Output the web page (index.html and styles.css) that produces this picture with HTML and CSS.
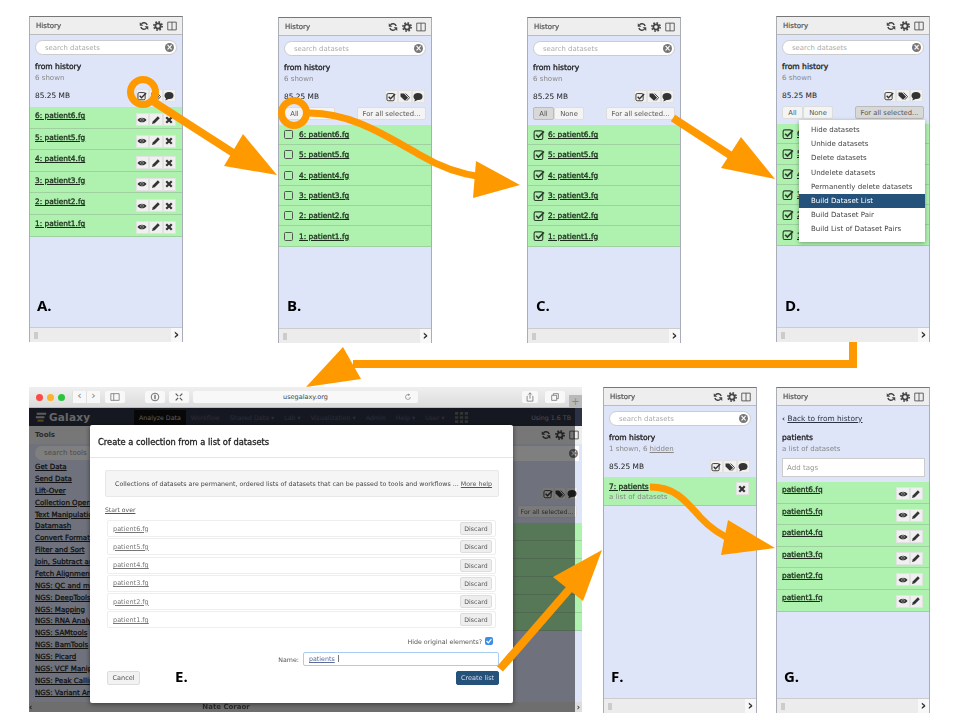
FILE: index.html
```html
<!DOCTYPE html>
<html lang="en">
<head>
  <meta charset="UTF-8">
  <title>Building a dataset list</title>
  <link rel="stylesheet" href="styles.css">
</head>
<body>

<svg class="defs" width="0" height="0">
  <symbol id="i-refresh" viewBox="0 0 16 16">
    <path d="M13 6.5A5.3 5.3 0 0 0 4 4.6M3 9.5A5.3 5.3 0 0 0 12 11.4" fill="none" stroke="currentColor" stroke-width="2.4"/>
    <path d="M1.2 1.8V7.6H7ZM14.8 14.2V8.4H9Z" fill="currentColor"/>
  </symbol>
  <symbol id="i-cog" viewBox="0 0 16 16">
    <circle cx="8" cy="8" r="4.2" fill="none" stroke="currentColor" stroke-width="3"/>
    <circle cx="8" cy="8" r="6.6" fill="none" stroke="currentColor" stroke-width="2.6" stroke-dasharray="2.6 2.58"/>
  </symbol>
  <symbol id="i-columns" viewBox="0 0 16 16">
    <path d="M1.2 1.8H14.8V14.2H1.2ZM8 1.8V14.2" fill="none" stroke="currentColor" stroke-width="1.3"/>
  </symbol>
  <symbol id="i-eye" viewBox="0 0 16 16">
    <path d="M.8 8C4 3 12 3 15.2 8C12 13 4 13 .8 8Z" fill="currentColor"/>
    <circle cx="8" cy="7.6" r="2.6" fill="#bbb"/>
    <circle cx="8" cy="8" r="1.6" fill="currentColor"/>
  </symbol>
  <symbol id="i-pencil" viewBox="0 0 16 16">
    <path d="M1.5 14.5L3 10L11 2L14 5L6 13Z" fill="currentColor"/>
  </symbol>
  <symbol id="i-times" viewBox="0 0 16 16">
    <path d="M3.6 3.6L12.4 12.4M12.4 3.6L3.6 12.4" fill="none" stroke="currentColor" stroke-width="3.6"/>
  </symbol>
  <symbol id="i-check" viewBox="0 0 16 16">
    <rect x="1.5" y="2.5" width="11.5" height="11.5" rx="2" fill="none" stroke="currentColor" stroke-width="1.5"/>
    <path d="M4.2 7.6L7.2 10.8L14.6 3.2" fill="none" stroke="currentColor" stroke-width="2.2"/>
  </symbol>
  <symbol id="i-tags" viewBox="0 0 16 16">
    <path d="M.8 2.5H6.5L13 9L8 14L.8 7Z" fill="currentColor"/>
    <path d="M9 2.5L15.4 9L10.8 14" fill="none" stroke="currentColor" stroke-width="1.4"/>
  </symbol>
  <symbol id="i-comment" viewBox="0 0 16 16">
    <ellipse cx="8" cy="7" rx="7.2" ry="5.6" fill="currentColor"/>
    <path d="M4 10L2 15L9 12Z" fill="currentColor"/>
  </symbol>
</svg>

<!-- A -->
<section class="panel panel-a">
  <header class="panel-head"><span>History</span><span class="head-icons"><svg><use href="#i-refresh"/></svg><svg><use href="#i-cog"/></svg><svg><use href="#i-columns"/></svg></span></header>
  <div class="search"><span>search datasets</span><b class="clear">×</b></div>
  <div class="name">from history</div>
  <div class="sub">6 shown</div>
  <div class="stats"><span>85.25 MB</span><span class="btn-group"><i><svg><use href="#i-check"/></svg></i><i><svg><use href="#i-tags"/></svg></i><i><svg><use href="#i-comment"/></svg></i></span></div>
  <ul class="rows">
    <li><a>6: patient6.fg</a><span class="btn-group"><i><svg><use href="#i-eye"/></svg></i><i><svg><use href="#i-pencil"/></svg></i><i><svg><use href="#i-times"/></svg></i></span></li>
    <li><a>5: patient5.fg</a><span class="btn-group"><i><svg><use href="#i-eye"/></svg></i><i><svg><use href="#i-pencil"/></svg></i><i><svg><use href="#i-times"/></svg></i></span></li>
    <li><a>4: patient4.fg</a><span class="btn-group"><i><svg><use href="#i-eye"/></svg></i><i><svg><use href="#i-pencil"/></svg></i><i><svg><use href="#i-times"/></svg></i></span></li>
    <li><a>3: patient3.fg</a><span class="btn-group"><i><svg><use href="#i-eye"/></svg></i><i><svg><use href="#i-pencil"/></svg></i><i><svg><use href="#i-times"/></svg></i></span></li>
    <li><a>2: patient2.fg</a><span class="btn-group"><i><svg><use href="#i-eye"/></svg></i><i><svg><use href="#i-pencil"/></svg></i><i><svg><use href="#i-times"/></svg></i></span></li>
    <li><a>1: patient1.fg</a><span class="btn-group"><i><svg><use href="#i-eye"/></svg></i><i><svg><use href="#i-pencil"/></svg></i><i><svg><use href="#i-times"/></svg></i></span></li>
  </ul>
  <footer class="panel-foot"><em></em><b>›</b></footer>
</section>

<!-- B -->
<section class="panel panel-b">
  <header class="panel-head"><span>History</span><span class="head-icons"><svg><use href="#i-refresh"/></svg><svg><use href="#i-cog"/></svg><svg><use href="#i-columns"/></svg></span></header>
  <div class="search"><span>search datasets</span><b class="clear">×</b></div>
  <div class="name">from history</div>
  <div class="sub">6 shown</div>
  <div class="stats"><span>85.25 MB</span><span class="btn-group"><i><svg><use href="#i-check"/></svg></i><i><svg><use href="#i-tags"/></svg></i><i><svg><use href="#i-comment"/></svg></i></span></div>
  <div class="selector"><span class="pair"><button>All</button><button>None</button></span><button>For all selected...</button></div>
  <ul class="rows rows-select">
    <li><u class="box"></u><a>6: patient6.fg</a></li>
    <li><u class="box"></u><a>5: patient5.fg</a></li>
    <li><u class="box"></u><a>4: patient4.fg</a></li>
    <li><u class="box"></u><a>3: patient3.fg</a></li>
    <li><u class="box"></u><a>2: patient2.fg</a></li>
    <li><u class="box"></u><a>1: patient1.fg</a></li>
  </ul>
  <footer class="panel-foot"><em></em><b>›</b></footer>
</section>

<!-- C -->
<section class="panel panel-c">
  <header class="panel-head"><span>History</span><span class="head-icons"><svg><use href="#i-refresh"/></svg><svg><use href="#i-cog"/></svg><svg><use href="#i-columns"/></svg></span></header>
  <div class="search"><span>search datasets</span><b class="clear">×</b></div>
  <div class="name">from history</div>
  <div class="sub">6 shown</div>
  <div class="stats"><span>85.25 MB</span><span class="btn-group"><i><svg><use href="#i-check"/></svg></i><i><svg><use href="#i-tags"/></svg></i><i><svg><use href="#i-comment"/></svg></i></span></div>
  <div class="selector"><span class="pair"><button class="pressed">All</button><button>None</button></span><button>For all selected...</button></div>
  <ul class="rows rows-select">
    <li><svg class="tick"><use href="#i-check"/></svg><a>6: patient6.fg</a></li>
    <li><svg class="tick"><use href="#i-check"/></svg><a>5: patient5.fg</a></li>
    <li><svg class="tick"><use href="#i-check"/></svg><a>4: patient4.fg</a></li>
    <li><svg class="tick"><use href="#i-check"/></svg><a>3: patient3.fg</a></li>
    <li><svg class="tick"><use href="#i-check"/></svg><a>2: patient2.fg</a></li>
    <li><svg class="tick"><use href="#i-check"/></svg><a>1: patient1.fg</a></li>
  </ul>
  <footer class="panel-foot"><em></em><b>›</b></footer>
</section>

<!-- D -->
<section class="panel panel-d">
  <header class="panel-head"><span>History</span><span class="head-icons"><svg><use href="#i-refresh"/></svg><svg><use href="#i-cog"/></svg><svg><use href="#i-columns"/></svg></span></header>
  <div class="search"><span>search datasets</span><b class="clear">×</b></div>
  <div class="name">from history</div>
  <div class="sub">6 shown</div>
  <div class="stats"><span>85.25 MB</span><span class="btn-group"><i><svg><use href="#i-check"/></svg></i><i><svg><use href="#i-tags"/></svg></i><i><svg><use href="#i-comment"/></svg></i></span></div>
  <div class="selector"><span class="pair"><button>All</button><button>None</button></span><button class="pressed">For all selected...</button></div>
  <ul class="rows rows-select">
    <li><svg class="tick"><use href="#i-check"/></svg><a>6: patient6.fg</a></li>
    <li><svg class="tick"><use href="#i-check"/></svg><a>5: patient5.fg</a></li>
    <li><svg class="tick"><use href="#i-check"/></svg><a>4: patient4.fg</a></li>
    <li><svg class="tick"><use href="#i-check"/></svg><a>3: patient3.fg</a></li>
    <li><svg class="tick"><use href="#i-check"/></svg><a>2: patient2.fg</a></li>
    <li><svg class="tick"><use href="#i-check"/></svg><a>1: patient1.fg</a></li>
  </ul>
  <ul class="menu">
    <li>Hide datasets</li>
    <li>Unhide datasets</li>
    <li>Delete datasets</li>
    <li>Undelete datasets</li>
    <li>Permanently delete datasets</li>
    <li class="active">Build Dataset List</li>
    <li>Build Dataset Pair</li>
    <li>Build List of Dataset Pairs</li>
  </ul>
  <footer class="panel-foot"><em></em><b>›</b></footer>
</section>

<!-- E -->
<section class="browser">
  <div class="chrome">
    <span class="lights"><u class="red"></u><u class="yellow"></u><u class="green"></u></span>
    <span class="tb-pair"><i>‹</i><i>›</i></span>
    <i class="tb-btn tb-sidebar"><svg viewBox="0 0 12 10"><path d="M1 1H11V9H1ZM4.5 1V9" fill="none" stroke="#777"/></svg></i>
    <i class="tb-btn"><svg viewBox="0 0 12 12"><circle cx="6" cy="6" r="4.6" fill="none" stroke="#555"/><path d="M6 3.4V8.8" stroke="#555" stroke-width="1.4"/></svg></i>
    <i class="tb-btn"><svg viewBox="0 0 12 12"><path d="M2 2L5 5M10 10L7 7M10 2L7 5M2 10L5 7" stroke="#555" stroke-width="1.4"/></svg></i>
    <span class="address">usegalaxy.org<svg viewBox="0 0 12 12"><path d="M9.5 6A3.6 3.6 0 1 1 7 2.6" fill="none" stroke="#777"/><path d="M6.5 .8L9 2.6L6.5 4.4Z" fill="#777"/></svg></span>
    <i class="tb-btn tb-share"><svg viewBox="0 0 12 12"><path d="M3 5H2.5V11H9.5V5H9M6 8V1M4 3L6 1L8 3" fill="none" stroke="#777"/></svg></i>
    <i class="tb-btn"><svg viewBox="0 0 12 12"><path d="M2 4H8V10H2ZM4 4V2H10V8H8" fill="none" stroke="#777"/></svg></i>
    <span class="plus">+</span>
  </div>
  <div class="masthead">
    <span class="brand"><svg viewBox="0 0 14 14"><path d="M2 2H13V4.5H2ZM1 6H11V8.5H1Z" fill="#bbb"/><path d="M3 10H10V12.5H3Z" fill="#b08a20"/></svg>Galaxy</span>
    <nav class="nav"><b>Analyze Data</b><span>Workflow</span><span>Shared Data ▾</span><span>Lab ▾</span><span>Visualization ▾</span><span>Admin</span><span>Help ▾</span><span>User ▾</span>
      <svg class="grid" viewBox="0 0 12 10"><path d="M0 0H3V2.4H0ZM4.5 0H7.5V2.4H4.5ZM9 0H12V2.4H9ZM0 3.8H3V6.2H0ZM4.5 3.8H7.5V6.2H4.5ZM9 3.8H12V6.2H9ZM0 7.6H3V10H0ZM4.5 7.6H7.5V10H4.5ZM9 7.6H12V10H9Z" fill="#666"/></svg>
    </nav>
    <span class="quota">Using 1.6 TB</span>
  </div>
  <div class="work">
    <aside class="tools">
      <h4>Tools</h4>
      <div class="tool-search">search tools</div>
      <a>Get Data</a><a>Send Data</a><a>Lift-Over</a><a>Collection Operations</a><a>Text Manipulation</a><a>Datamash</a><a>Convert Formats</a><a>Filter and Sort</a><a>Join, Subtract and Group</a><a>Fetch Alignments</a><a>NGS: QC and manipulation</a><a>NGS: DeepTools</a><a>NGS: Mapping</a><a>NGS: RNA Analysis</a><a>NGS: SAMtools</a><a>NGS: BamTools</a><a>NGS: Picard</a><a>NGS: VCF Manipulation</a><a>NGS: Peak Calling</a><a>NGS: Variant Analysis</a>
    </aside>
    <div class="center"></div>
    <aside class="history-side">
      <div class="side-head"><span class="head-icons"><svg><use href="#i-refresh"/></svg><svg><use href="#i-cog"/></svg><svg><use href="#i-columns"/></svg></span></div>
      <div class="side-search"><b class="clear">×</b></div>
      <div class="side-stats"><span class="btn-group"><i><svg><use href="#i-check"/></svg></i><i><svg><use href="#i-tags"/></svg></i><i><svg><use href="#i-comment"/></svg></i></span></div>
      <div class="side-select"><button>For all selected...</button></div>
      <div class="side-rows"><u></u><u></u><u></u><u></u><u></u><u></u></div>
    </aside>
  </div>
  <div class="status"><b>‹</b><span class="user">Nate Coraor</span><b class="next">›</b></div>
  <div class="backdrop"></div>
  <div class="modal">
    <h3>Create a collection from a list of datasets</h3>
    <div class="modal-body">
      <p class="notice">Collections of datasets are permanent, ordered lists of datasets that can be passed to tools and workflows ... <a>More help</a></p>
      <a class="start-over">Start over</a>
      <ul class="elements">
        <li><a>patient6.fg</a><button>Discard</button></li>
        <li><a>patient5.fg</a><button>Discard</button></li>
        <li><a>patient4.fg</a><button>Discard</button></li>
        <li><a>patient3.fg</a><button>Discard</button></li>
        <li><a>patient2.fg</a><button>Discard</button></li>
        <li><a>patient1.fg</a><button>Discard</button></li>
      </ul>
      <div class="hide-orig">Hide original elements?<span class="blue-check"><svg viewBox="0 0 10 10"><path d="M2 5L4.2 7.4L8 2.6" fill="none" stroke="#fff" stroke-width="1.5"/></svg></span></div>
      <div class="name-line">Name:<span class="name-input"><a>patients</a></span></div>
      <div class="modal-foot"><button>Cancel</button><button class="primary">Create list</button></div>
    </div>
  </div>
</section>

<!-- F -->
<section class="panel panel-f">
  <header class="panel-head"><span>History</span><span class="head-icons"><svg><use href="#i-refresh"/></svg><svg><use href="#i-cog"/></svg><svg><use href="#i-columns"/></svg></span></header>
  <div class="search"><span>search datasets</span><b class="clear">×</b></div>
  <div class="name">from history</div>
  <div class="sub">1 shown, 6 <a>hidden</a></div>
  <div class="stats"><span>85.25 MB</span><span class="btn-group"><i><svg><use href="#i-check"/></svg></i><i><svg><use href="#i-tags"/></svg></i><i><svg><use href="#i-comment"/></svg></i></span></div>
  <div class="collection">
    <div><a>7: patients</a><div class="sub">a list of datasets</div></div>
    <span class="btn-group"><i><svg><use href="#i-times"/></svg></i></span>
  </div>
  <footer class="panel-foot"><em></em><b>›</b></footer>
</section>

<!-- G -->
<section class="panel panel-g">
  <header class="panel-head"><span>History</span><span class="head-icons"><svg><use href="#i-refresh"/></svg><svg><use href="#i-cog"/></svg><svg><use href="#i-columns"/></svg></span></header>
  <div class="back"><b>‹</b> <a>Back to from history</a></div>
  <div class="name">patients</div>
  <div class="sub">a list of datasets</div>
  <div class="tags">Add tags</div>
  <ul class="rows rows-plain">
    <li><a>patient6.fq</a><span class="btn-group"><i><svg><use href="#i-eye"/></svg></i><i><svg><use href="#i-pencil"/></svg></i></span></li>
    <li><a>patient5.fq</a><span class="btn-group"><i><svg><use href="#i-eye"/></svg></i><i><svg><use href="#i-pencil"/></svg></i></span></li>
    <li><a>patient4.fq</a><span class="btn-group"><i><svg><use href="#i-eye"/></svg></i><i><svg><use href="#i-pencil"/></svg></i></span></li>
    <li><a>patient3.fq</a><span class="btn-group"><i><svg><use href="#i-eye"/></svg></i><i><svg><use href="#i-pencil"/></svg></i></span></li>
    <li><a>patient2.fq</a><span class="btn-group"><i><svg><use href="#i-eye"/></svg></i><i><svg><use href="#i-pencil"/></svg></i></span></li>
    <li><a>patient1.fq</a><span class="btn-group"><i><svg><use href="#i-eye"/></svg></i><i><svg><use href="#i-pencil"/></svg></i></span></li>
  </ul>
  <footer class="panel-foot"><em></em><b>›</b></footer>
</section>

<!-- arrows drawn over everything -->
<svg class="arrows" width="960" height="720" viewBox="0 0 960 720">
  <g fill="none" stroke="#ff9900">
    <circle cx="143" cy="92" r="12.5" stroke-width="7"/>
    <path d="M154 102L238 156" stroke-width="8"/>
    <circle cx="294" cy="113" r="12.5" stroke-width="7"/>
    <path d="M307 113C350 112 385 135 420 155C440 167 460 174 482 177" stroke-width="7"/>
    <path d="M673 118L736 159" stroke-width="8"/>
    <path d="M853 342V364H353" stroke-width="8"/>
    <path d="M500 669L572 586" stroke-width="8"/>
    <path d="M650 487C675 487 685 500 700 517C712 530 722 536 735 541" stroke-width="7"/>
  </g>
  <g fill="#ff9900">
    <path d="M243 134L224 166L277 175Z"/>
    <path d="M476 161L473 198L520 185Z"/>
    <path d="M741 137L721 168L775 179Z"/>
    <path d="M343 347L306 387L361 379Z"/>
    <path d="M602 550L553 577L583 601Z"/>
    <path d="M728 520L721 555L775 548Z"/>
  </g>
</svg>

<span class="label label-a">A.</span>
<span class="label label-b">B.</span>
<span class="label label-c">C.</span>
<span class="label label-d">D.</span>
<span class="label label-e">E.</span>
<span class="label label-f">F.</span>
<span class="label label-g">G.</span>

</body>
</html>
```

FILE: styles.css
```css
* {
  margin: 0;
  padding: 0;
  box-sizing: border-box;
}

html, body {
  width: 960px;
  height: 720px;
  background: #fff;
  color: #222;
  font-family: "DejaVu Sans", sans-serif;
  font-size: 7.05px;
  overflow: hidden;
}

ul {
  list-style: none;
}

i, em, u {
  font-style: normal;
  text-decoration: none;
}

button {
  font-family: inherit;
  font-size: 6.8px;
  color: #555;
  background: #f4f4f4;
  border: 1px solid #ddd;
  border-radius: 2px;
}

.defs {
  position: absolute;
}

/* history panels, each one sits on the figure as its own item */
.panel {
  position: absolute;
  width: 154px;
  height: 326px;
  display: flex;
  flex-direction: column;
  background: #dfe5f9;
  border-top: 1px solid #777;
  border-left: 1px solid #a9adb8;
  border-right: 1px solid #a9adb8;
  filter: blur(.35px);
}

.panel-a { left: 29px; top: 16px; }
.panel-b { left: 278px; top: 17px; }
.panel-c { left: 527px; top: 17px; }
.panel-d { left: 776px; top: 16px; }
.panel-f { left: 603px; top: 387px; }
.panel-g { left: 776px; top: 387px; }

.panel-head {
  height: 18px;
  flex: none;
  display: flex;
  justify-content: space-between;
  align-items: center;
  padding: 0 5px 0 6px;
  background: #eee;
  border-bottom: 1px solid #bbb;
  color: #555;
  -webkit-text-stroke: .2px #555;
}

.head-icons {
  display: flex;
  gap: 4px;
  color: #444;
}

.head-icons svg {
  width: 10px;
  height: 10px;
}

.search {
  height: 15px;
  flex: none;
  margin: 5px 5px 0 5px;
  padding: 0 2px 0 9px;
  display: flex;
  justify-content: space-between;
  align-items: center;
  background: #fff;
  border: 1px solid #ccc;
  border-radius: 8px;
  font-size: 6.9px;
  color: #aaa;
}

.clear {
  width: 9px;
  height: 9px;
  border-radius: 50%;
  background: #777;
  color: #fff;
  font-size: 8px;
  line-height: 9px;
  text-align: center;
}

.name {
  margin: 6px 0 0 5px;
  line-height: 11px;
  font-size: 7.6px;
  -webkit-text-stroke: .3px #222;
  color: #222;
}

.sub {
  margin-left: 5px;
  line-height: 11px;
  color: #888;
}

.sub a {
  text-decoration: underline;
}

.stats {
  height: 15px;
  flex: none;
  margin: 5px 6px 4px 5px;
  display: flex;
  justify-content: space-between;
  align-items: center;
  font-size: 7.4px;
}

.btn-group {
  display: inline-flex;
  flex: none;
}

.btn-group i {
  width: 13.5px;
  height: 13px;
  display: flex;
  align-items: center;
  justify-content: center;
  background: #f0f0f0;
  border: 1px solid #e2e2e2;
  color: #333;
}

.btn-group svg {
  width: 10px;
  height: 10px;
}

.selector {
  height: 13px;
  flex: none;
  margin: -1px 5px 5px 5px;
  display: flex;
  justify-content: space-between;
}

.selector > button {
  width: 69px;
  padding: 0;
}

.pair {
  display: flex;
}

.pair button:first-child {
  width: 21px;
}

.pair button:last-child {
  width: 30px;
}

button.pressed {
  background: #d8d8d8;
  border-color: #bbb;
}

.rows li {
  height: 21.6px;
  display: flex;
  align-items: flex-start;
  justify-content: space-between;
  padding: 4px 6px 0 5px;
  background: #aff1af;
  border-bottom: 1px solid #9fd0a0;
}

.rows a, .collection a {
  font-size: 7.4px;
  -webkit-text-stroke: .3px #1c2b1c;
  text-decoration: underline;
  color: #1c2b1c;
}

.rows .btn-group {
  margin-top: 2px;
}

.rows-select li {
  height: 20.3px;
  justify-content: flex-start;
  gap: 6px;
  align-items: center;
  padding: 0 0 0 5px;
}

.box {
  width: 9px;
  height: 9px;
  border: 1px solid #555;
  border-radius: 1.5px;
}

.tick {
  width: 12px;
  height: 12px;
  color: #2e3e2e;
  margin-right: -3px;
}

.collection {
  height: 29px;
  flex: none;
  margin-top: -1px;
  display: flex;
  justify-content: space-between;
  padding: 5px 7px 0 5px;
  background: #aff1af;
  border-bottom: 1px solid #9fd0a0;
}

.collection .sub {
  margin-left: 0;
}

.back {
  margin: 7px 0 0 5px;
  line-height: 11px;
  font-size: 7.4px;
  color: #2c3143;
}

.back a {
  text-decoration: underline;
}

.panel-g .name {
  margin-top: 8px;
}

.tags {
  height: 19px;
  flex: none;
  margin: 4px 4px 5px 5px;
  padding-left: 4px;
  line-height: 17px;
  background: #fff;
  border: 1px solid #ccc;
  color: #999;
}

.rows-plain li {
  padding-top: 3px;
}

.panel-foot {
  height: 15px;
  flex: none;
  margin-top: auto;
  display: flex;
  justify-content: space-between;
  align-items: center;
  padding-left: 4px;
  background: #ececec;
  border-top: 1px solid #ccc;
}

.panel-foot em {
  width: 4px;
  height: 7px;
  background: #ccc;
}

.panel-foot b {
  width: 11px;
  height: 14px;
  text-align: center;
  font-size: 14px;
  line-height: 12px;
  color: #333;
  background: #f8f8f8;
}

/* dropdown opened over panel D */
.menu {
  position: absolute;
  left: 22px;
  top: 103px;
  width: 126px;
  padding: 3px 0 5px 0;
  background: #fff;
  box-shadow: 0 1px 4px rgba(0, 0, 0, 0.35);
  color: #444;
}

.menu li {
  height: 14.2px;
  line-height: 14px;
  padding-left: 12px;
}

.menu .active {
  background: #25527a;
  color: #fff;
}

/* browser window for step E */
.browser {
  position: absolute;
  left: 29px;
  top: 387px;
  width: 553px;
  height: 325px;
  display: flex;
  flex-direction: column;
  overflow: hidden;
  filter: blur(.35px);
}

.chrome {
  height: 21px;
  flex: none;
  display: flex;
  align-items: center;
  padding-left: 7px;
  background: linear-gradient(#efefef, #dcdcdc);
  border-bottom: 1px solid #bbb;
}

.lights {
  display: flex;
  gap: 4px;
  margin-right: 7px;
}

.lights u {
  width: 7px;
  height: 7px;
  border-radius: 50%;
}

.red { background: #fc4b45; }
.yellow { background: #fdb22c; }
.green { background: #2ac540; }

.tb-pair {
  display: flex;
  margin-right: 5px;
}

.tb-pair i {
  width: 14px;
  height: 12px;
  background: #f8f8f8;
  color: #777;
  font-size: 11px;
  line-height: 10px;
  text-align: center;
  border-left: 1px solid #e0e0e0;
}

.tb-btn {
  width: 20px;
  height: 12px;
  margin-right: 4px;
  display: flex;
  align-items: center;
  justify-content: center;
  background: #f8f8f8;
  border-radius: 2px;
}

.tb-btn svg {
  width: 10px;
  height: 10px;
}

.tb-sidebar {
  margin-right: 20px;
}

.tb-share {
  width: 16px;
  margin-right: 7px;
}

.address {
  width: 225px;
  height: 12px;
  margin-right: 104px;
  position: relative;
  text-align: center;
  line-height: 12px;
  background: #f8f8f8;
  border-radius: 2px;
  color: #444;
  font-size: 6.5px;
}

.address svg {
  position: absolute;
  right: 6px;
  top: 2px;
  width: 8px;
  height: 8px;
}

.plus {
  position: absolute;
  right: 0;
  top: 8px;
  width: 13px;
  height: 13px;
  background: #b9b9b9;
  color: #888;
  font-size: 10px;
  line-height: 13px;
  text-align: center;
}

.masthead {
  height: 18px;
  flex: none;
  display: flex;
  align-items: center;
  background: #2c3143;
  color: #9a9ca8;
}

.brand {
  width: 105px;
  display: flex;
  align-items: center;
  gap: 2px;
  padding-left: 6px;
  font-size: 10.5px;
  font-weight: bold;
  letter-spacing: .2px;
  color: #ccc;
}

.brand svg {
  width: 12px;
  height: 12px;
}

.nav {
  display: flex;
  align-items: center;
  gap: 10px;
  font-size: 6.3px;
  flex: 1;
}

.nav b {
  padding: 4px 5px;
  font-weight: normal;
  background: #111;
  color: #bbb;
  margin-right: -5px;
}

.nav span {
  color: #555a6c;
}

.grid {
  width: 13px;
  height: 11px;
}

.quota {
  margin-right: 11px;
  font-size: 6.3px;
}

.work {
  flex: 1;
  display: flex;
  min-height: 0;
}

.tools {
  width: 150px;
  flex: none;
  background: #dfe5f9;
}

.tools h4 {
  height: 18px;
  padding-left: 6px;
  line-height: 18px;
  background: #eee;
  font-size: 7px;
  color: #555;
}

.tool-search {
  height: 14px;
  margin: 2px 5px 0 6px;
  padding-left: 9px;
  line-height: 14px;
  background: #fff;
  border-radius: 7px;
  color: #999;
}

.tools a {
  display: block;
  height: 11.88px;
  margin-left: 6px;
  line-height: 12px;
  font-size: 7.05px;
  -webkit-text-stroke: .25px #222;
  text-decoration: underline;
  white-space: nowrap;
  color: #222;
}

.tool-search + a {
  margin-top: 1px;
}

.center {
  flex: 1;
  background: #fff;
}

.history-side {
  width: 70px;
  flex: none;
  display: flex;
  flex-direction: column;
  background: #dfe5f9;
}

.side-head {
  height: 18px;
  display: flex;
  justify-content: flex-end;
  align-items: center;
  padding-right: 3px;
  background: #eee;
}

.side-search {
  height: 15px;
  margin-top: 2px;
  margin-right: 3px;
  padding-right: 1px;
  display: flex;
  justify-content: flex-end;
  align-items: center;
  background: #fff;
}

.side-stats {
  margin-top: 26px;
  padding-left: 30px;
}

.side-stats .btn-group i {
  width: 12px;
}

.side-select {
  margin-top: 4px;
  padding-left: 5px;
  white-space: nowrap;
}

.side-select button {
  width: 60px;
  height: 13px;
  font-size: 6.2px;
}

.side-rows {
  margin-top: 5px;
  display: flex;
  flex-direction: column;
}

.side-rows u {
  height: 18px;
  background: #aff1af;
  border-bottom: 1px solid #9fd0a0;
}

.status {
  height: 10px;
  flex: none;
  display: flex;
  align-items: center;
  background: #ddd;
  font-size: 8px;
  color: #333;
}

.status .user {
  margin-left: 170px;
  font-weight: bold;
  color: #555;
  font-size: 7px;
}

.status .next {
  margin-left: auto;
  margin-right: 2px;
}

.backdrop {
  position: absolute;
  left: 0;
  top: 21px;
  right: 7px;
  bottom: 0;
  background: rgba(0, 0, 0, 0.5);
}

.modal {
  position: absolute;
  left: 61px;
  top: 38px;
  width: 423px;
  height: 278px;
  background: #fff;
  border-radius: 2px;
  box-shadow: 0 1px 5px rgba(0, 0, 0, 0.5);
  color: #444;
}

.modal h3 {
  height: 33px;
  padding-left: 8px;
  line-height: 34px;
  font-size: 8.3px;
  font-weight: normal;
  -webkit-text-stroke: .3px #222;
  color: #222;
  border-bottom: 1px solid #e5e5e5;
}

.modal-body {
  padding: 12px 14px 0 15px;
}

.notice {
  height: 27px;
  padding-left: 9px;
  line-height: 26px;
  background: #f5f5f5;
  border: 1px solid #e8e8e8;
  border-radius: 2px;
  font-size: 6.3px;
  white-space: nowrap;
}

.notice a, .start-over {
  text-decoration: underline;
  color: #555;
}

.start-over {
  display: block;
  margin-top: 8px;
  line-height: 10px;
  font-size: 6.1px;
}

.elements {
  margin: 5px 3px 0 2px;
}

.elements li {
  height: 17px;
  margin-bottom: 1.3px;
  padding: 0 3px 0 5px;
  display: flex;
  justify-content: space-between;
  align-items: center;
  border: 1px solid #eee;
  border-radius: 2px;
}

.elements a {
  color: #777;
  text-decoration: underline;
  font-size: 6.5px;
}

.elements button {
  width: 32px;
  height: 13px;
  font-size: 6.2px;
  background: #eee;
}

.hide-orig {
  margin-top: 8px;
  padding-right: 6px;
  display: flex;
  justify-content: flex-end;
  align-items: center;
  gap: 3px;
  height: 10px;
  font-size: 6.3px;
  color: #555;
}

.blue-check {
  width: 8px;
  height: 8px;
  border-radius: 2px;
  background: #3b8ee8;
}

.blue-check svg {
  display: block;
}

.name-line {
  margin-top: 6px;
  display: flex;
  justify-content: flex-end;
  align-items: center;
  gap: 4px;
  font-size: 6.3px;
  color: #555;
}

.name-input {
  width: 196px;
  height: 14px;
  padding-left: 5px;
  line-height: 12px;
  background: #fff;
  border: 1px solid #a8cdf0;
  border-radius: 2px;
}

.name-input a {
  text-decoration: underline;
  color: #5a6a9a;
  padding-right: 3px;
  border-right: 1px solid #777;
}

.modal-foot {
  margin-top: 5px;
  padding-left: 2px;
  display: flex;
  justify-content: space-between;
}

.modal-foot button {
  width: 33px;
  height: 14px;
  font-size: 6.5px;
  background: #f2f2f2;
}

.modal-foot .primary {
  width: 43px;
  background: #25527a;
  border-color: #25527a;
  color: #dde;
}

/* arrows and step letters lie over the figure */
.arrows {
  position: absolute;
  left: 0;
  top: 0;
}

.label {
  position: absolute;
  font-family: "Open Sans", sans-serif;
  font-size: 15px;
  line-height: 18px;
  font-weight: bold;
  color: #000;
}

.label-a { left: 37px; top: 296px; }
.label-b { left: 287px; top: 296px; }
.label-c { left: 536px; top: 296px; }
.label-d { left: 785px; top: 296px; }
.label-e { left: 175px; top: 667px; }
.label-f { left: 611px; top: 667px; }
.label-g { left: 784px; top: 667px; }
```
